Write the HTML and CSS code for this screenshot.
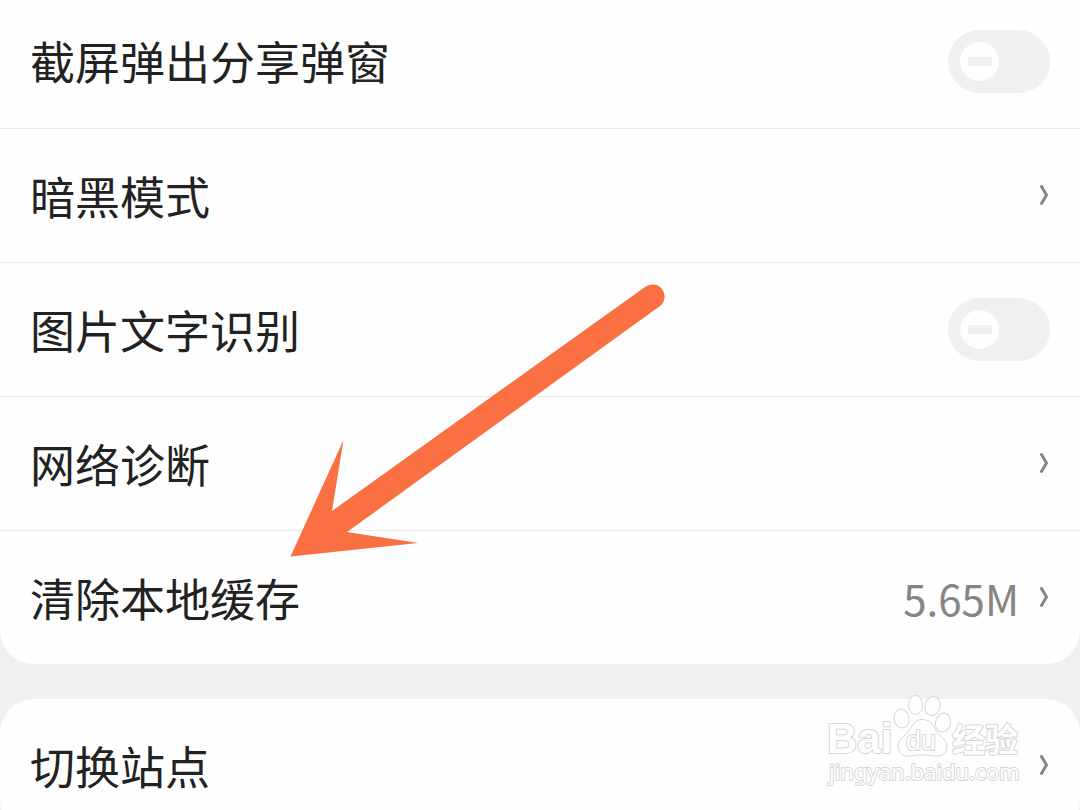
FILE: index.html
```html
<!DOCTYPE html>
<html lang="zh-CN">
<head>
<meta charset="utf-8">
<meta name="viewport" content="width=device-width, initial-scale=1">
<title>设置</title>
<link rel="stylesheet" href="styles.css">
</head>
<body>
<main class="page">
  <section class="card card-first">
    <div class="row">
      <label class="title" for="share">截屏弹出分享弹窗</label>
      <input class="switch" type="checkbox" role="switch" id="share">
    </div>
    <a class="row" href="#dark">
      <span class="title">暗黑模式</span>
      <svg class="chevron" viewBox="0 0 12 22" aria-hidden="true"><path d="M3.500 1.500 8.500 10 3.500 18.500"/></svg>
    </a>
    <div class="row">
      <label class="title" for="ocr">图片文字识别</label>
      <input class="switch" type="checkbox" role="switch" id="ocr">
    </div>
    <a class="row" href="#network">
      <span class="title">网络诊断</span>
      <svg class="chevron" viewBox="0 0 12 22" aria-hidden="true"><path d="M3.500 1.500 8.500 10 3.500 18.500"/></svg>
    </a>
    <a class="row" href="#cache">
      <span class="title">清除本地缓存</span>
      <span class="value">5.65M</span>
      <svg class="chevron" viewBox="0 0 12 22" aria-hidden="true"><path d="M3.500 1.500 8.500 10 3.500 18.500"/></svg>
    </a>
  </section>
  <section class="card">
    <a class="row" href="#site">
      <span class="title">切换站点</span>
      <svg class="chevron" viewBox="0 0 12 22" aria-hidden="true"><path d="M3.500 1.500 8.500 10 3.500 18.500"/></svg>
    </a>
  </section>

  <svg class="arrow" viewBox="0 0 380 280" aria-hidden="true">
    <path d="M5.500 276.500 58.500 160 47 231 360 7A12 12 0 0 1 375 26L62 252 133 263Z"/>
  </svg>

  <svg class="watermark" viewBox="0 0 210 100" role="img" aria-label="Baidu 经验">
    <text class="wm-latin" x="7" y="63">Bai</text>
    <g class="wm-paw">
      <ellipse cx="81.500" cy="28.500" rx="7.500" ry="9.500" transform="rotate(-10 81.500 28.500)"/>
      <ellipse cx="95.500" cy="15" rx="7" ry="9.500"/>
      <ellipse cx="112.500" cy="16" rx="7.500" ry="9.500" transform="rotate(12 112.500 16)"/>
      <ellipse cx="123" cy="32.500" rx="7.500" ry="9.500" transform="rotate(12 123 32.500)"/>
      <path d="M102 29.500c8 0 11 5 14 11s11 9 11 16c0 8-6 10-13 9.500-6-1.500-17-1.500-23 0-8 1-13-3-13-11 1-6 6-8 10-13s6-12.500 14-12.500z"/>
    </g>
    <text class="wm-du" x="86" y="60">du</text>
    <text class="wm-han" x="132" y="62">经验</text>
    <text class="wm-url" x="9" y="90">jingyan.baidu.com</text>
  </svg>
</main>
</body>
</html>
```
FILE: styles.css
```css
* { box-sizing: border-box; }

body {
  margin: 0;
  background: #f0f0f0;
  color: #222;
  font-family: "Noto Sans CJK SC", sans-serif;
}

.page {
  position: relative;
  display: flex;
  flex-direction: column;
  gap: 35px;
  height: 100vh;
  overflow: hidden;
}

.card {
  flex: none;
  border-radius: 34px;
  background: #fefefe;
}

/* the list is scrolled, so this card continues above the window */
.card-first {
  margin-top: -6px;
  border-radius: 0 0 34px 34px;
}

.row {
  display: flex;
  align-items: center;
  min-height: 134px;
  padding: 0 30px;
  color: inherit;
  text-decoration: none;
}

.row + .row { border-top: 1px solid #ebebeb; }

.title {
  flex: 1;
  font-size: 45px;
  line-height: 66px;
}

.value {
  margin-right: 19px;
  color: #858585;
  font-size: 42px;
  line-height: 66px;
}

.chevron {
  width: 12px;
  height: 22px;
  fill: none;
  stroke: #858585;
  stroke-width: 3;
  stroke-linecap: round;
  stroke-linejoin: round;
}

.switch {
  appearance: none;
  display: flex;
  align-items: center;
  width: 102px;
  height: 63px;
  margin: 0;
  padding: 0 12px;
  border-radius: 32px;
  background: #f0f0f0;
}

.switch::before {
  content: "";
  width: 39px;
  height: 39px;
  border-radius: 50%;
  background: linear-gradient(#f0f0f0, #f0f0f0) center / 24px 9px no-repeat #fefefe;
}

.switch:checked { justify-content: flex-end; background: #fa7042; }

.arrow {
  position: absolute;
  left: 285px;
  top: 280px;
  width: 380px;
  height: 280px;
  fill: #fa7042;
  pointer-events: none;
}

.watermark {
  position: absolute;
  right: 50px;
  top: 690px;
  width: 210px;
  height: 100px;
  fill: #fefefe;
  stroke: #d6d6d6;
  stroke-width: 2;
  stroke-linejoin: round;
  paint-order: stroke;
  pointer-events: none;
}

.wm-paw { paint-order: normal; stroke-width: 1; }
.wm-latin, .wm-du { font-family: "Liberation Sans", sans-serif; }
.wm-latin { font-size: 42px; font-weight: 700; }
.wm-du { font-size: 27px; }
.wm-han { font-size: 33px; font-weight: 700; }
.wm-url { font-family: "Noto Sans", sans-serif; font-size: 22px; }
```
